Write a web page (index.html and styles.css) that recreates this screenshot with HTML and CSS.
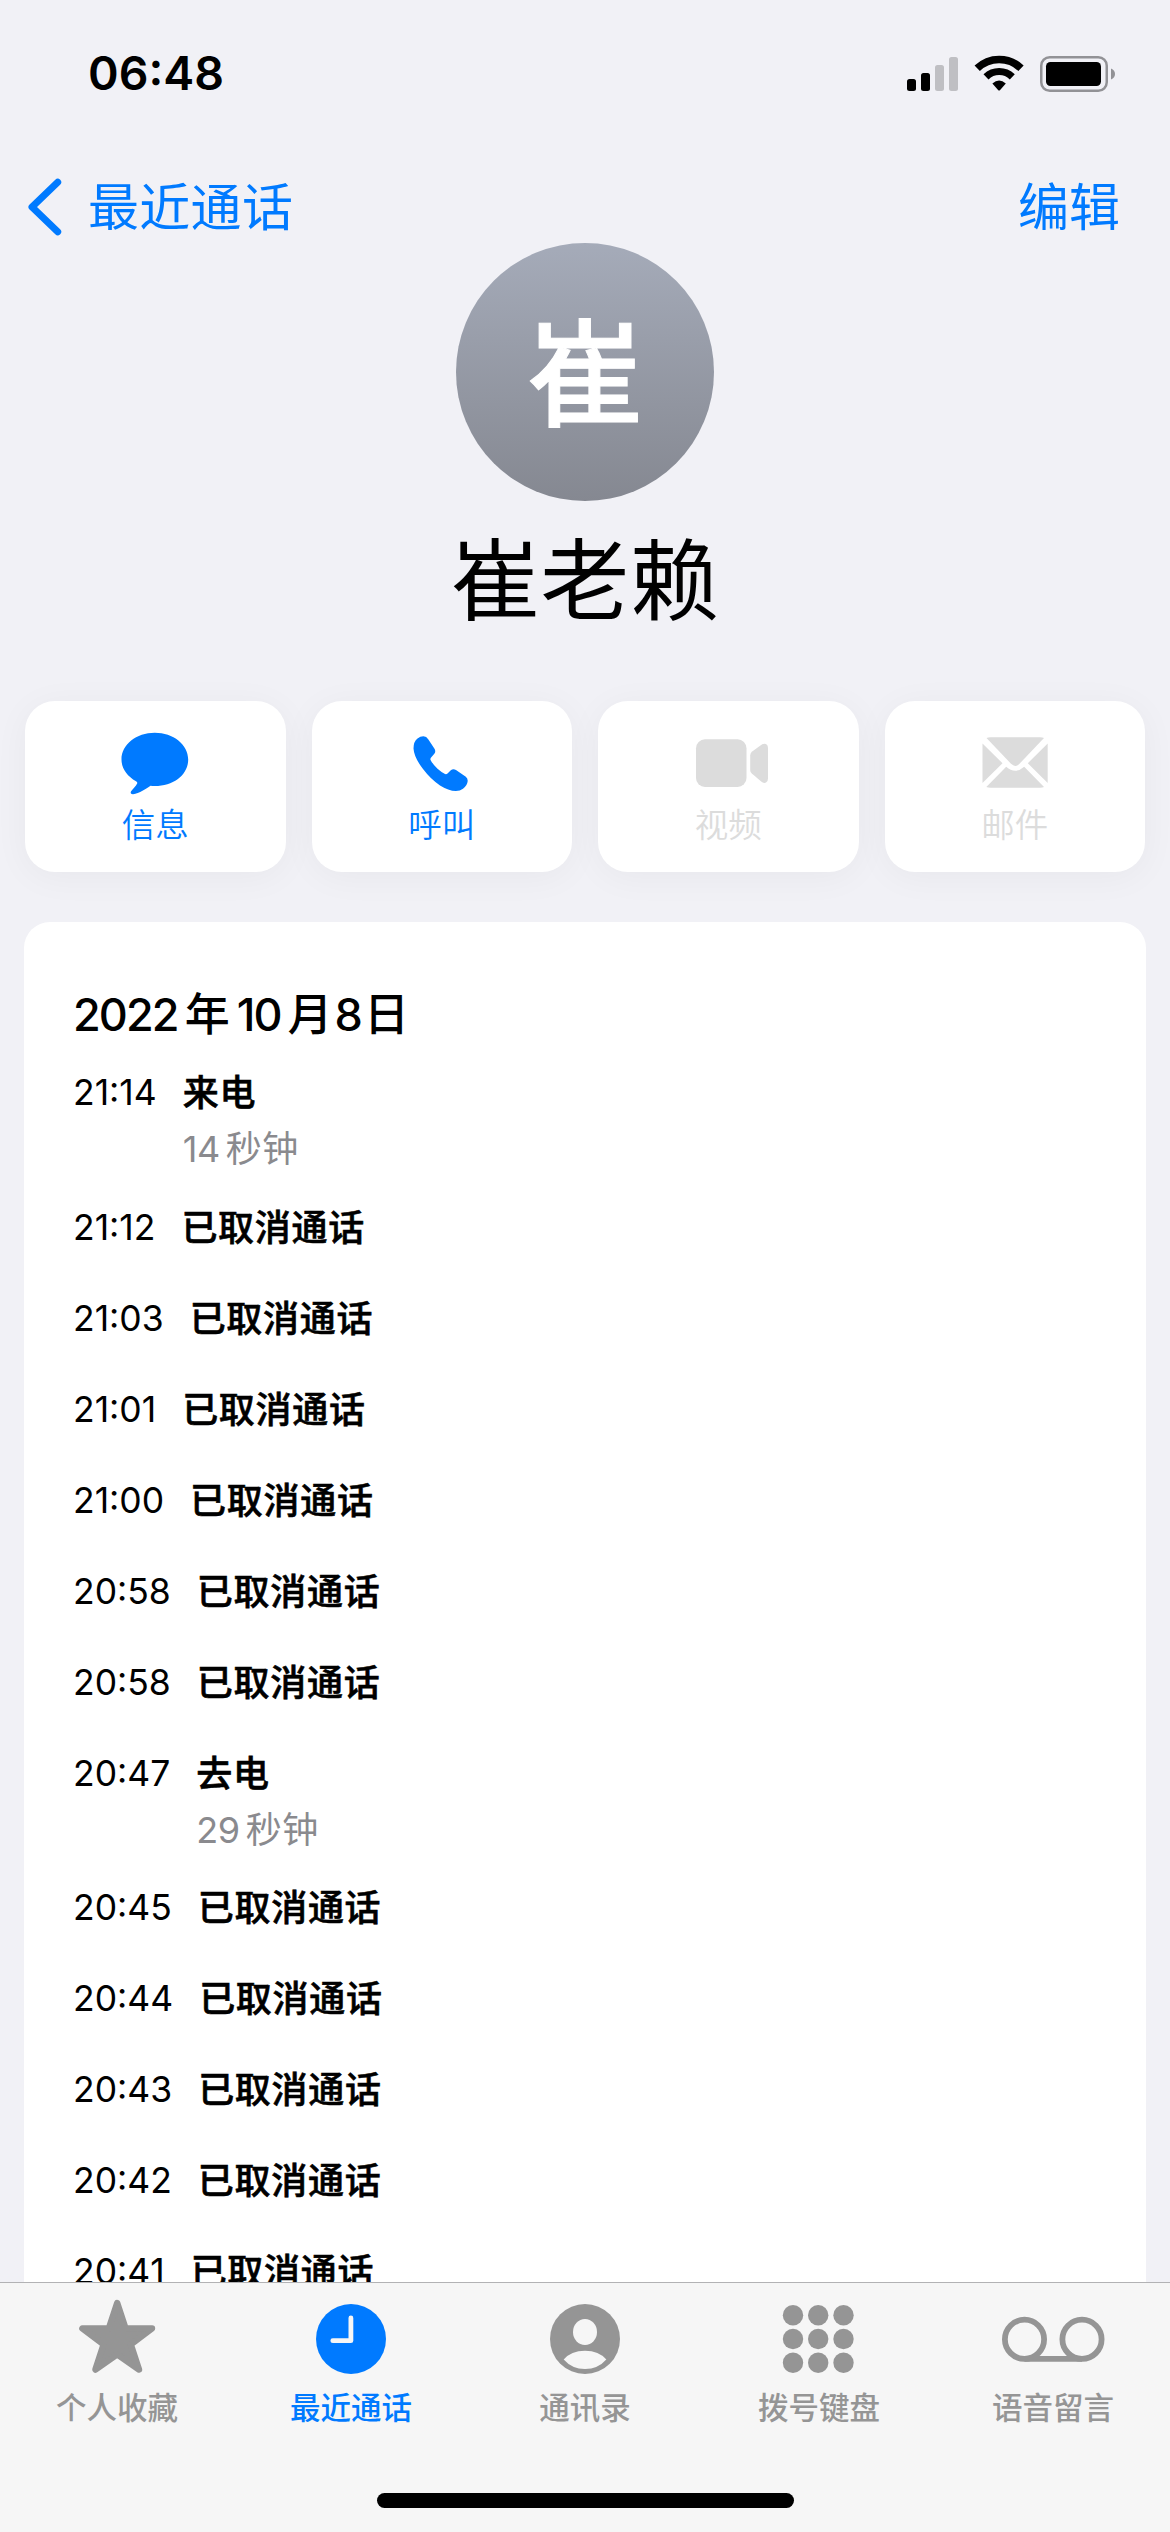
FILE: index.html
```html
<!DOCTYPE html>
<html lang="zh-CN">
<head>
<meta charset="utf-8">
<title>最近通话</title>
<link rel="stylesheet" href="styles.css">
</head>
<body>
<div class="screen">
  <header class="status">
    <span class="clock">06:48</span>
    <svg class="status-icons" width="209" height="37" viewBox="907 55 209 37">
      <rect x="907" y="79" width="9" height="12" rx="2.5"/>
      <rect x="921" y="73" width="9" height="18" rx="2.5"/>
      <rect x="935" y="65" width="9" height="26" rx="2.5" fill="#bfbfc3"/>
      <rect x="949" y="57" width="9" height="34" rx="2.5" fill="#bfbfc3"/>
      <path d="M977.2 68.3A31.500 31.500 0 0 1 1021 68.3" fill="none" stroke="#000" stroke-width="7.600"/>
      <path d="M986 76.800A19 19 0 0 1 1012.300 76.800" fill="none" stroke="#000" stroke-width="7.200"/>
      <path d="M992.400 83.500Q999.100 77.400 1005.800 83.500L999.900 90.200Q999.100 91 998.300 90.200Z"/>
      <rect x="1041.250" y="57.250" width="65.500" height="33.500" rx="8.500" fill="none" stroke="#929296" stroke-width="2.500"/>
      <rect x="1046" y="62" width="55" height="24" rx="4.500"/>
      <path d="M1111 68.500Q1115 70.200 1115 74Q1115 77.800 1111 79.500Z" fill="#929296"/>
    </svg>
  </header>

  <nav class="nav">
    <a class="back">
      <svg width="34" height="58" viewBox="28 178 34 58"><path d="M57.700 182.300L32 207L57.700 231.700" fill="none" stroke="#007aff" stroke-width="7" stroke-linecap="round" stroke-linejoin="round"/></svg>
      <span>最近通话</span>
    </a>
    <a class="edit">编辑</a>
  </nav>

  <main class="content">
    <div class="avatar">崔</div>
    <h1 class="name">崔老赖</h1>

    <div class="actions">
      <div class="action">
        <svg width="100" height="70" viewBox="105.500 729 100 70"><path d="M155.300 732.700C173.800 732.700 188.700 744.500 188.700 759.500C188.700 774.500 174.500 786 155.300 786Q153 786 151 785.700C146.500 788.700 140 793.300 133.500 794.200C131.500 794.300 130.600 792.800 131.600 791.300C133.300 789 136.300 786.300 137.900 782.900Q137.700 782 136.500 781.300C127.500 776 122 768.500 122 759.500C122 744.500 136.800 732.700 155.300 732.700Z"/></svg>
        <span>信息</span>
      </div>
      <div class="action">
        <svg width="100" height="70" viewBox="391.500 729 100 70"><path d="M422.900 736.300Q426 736.300 427.700 739.200L434 748.700Q435.500 751.200 434 753.500L430.400 757.700Q429.500 759 430.200 760.200Q432.500 764.500 437 768.800Q441 772.400 444.500 774Q446 774.500 447 773.500L450.300 770.200Q452.700 768.300 455.500 770L465.300 776.700Q467.300 778.300 467.200 781Q466.800 785.500 462.500 788.800Q459.500 791 455.400 791Q448 790.700 439.500 785.400Q430 779 422.500 769Q413.600 757.500 413 748.500Q413 741.500 417 738.500Q419.800 736.300 422.900 736.300Z"/></svg>
        <span>呼叫</span>
      </div>
      <div class="action disabled">
        <svg width="100" height="70" viewBox="678 729 100 70"><rect x="696" y="739.300" width="50.500" height="47.700" rx="9"/><path d="M750.200 755.500Q750.200 753.300 751.800 751.800L761.500 744.800Q764 743 766 744Q768 745 768 748V778.500Q768 781.500 766 782.600Q764 783.500 761.500 781.700L751.800 773.500Q750.200 772 750.200 770Z"/></svg>
        <span>视频</span>
      </div>
      <div class="action disabled">
        <svg width="100" height="70" viewBox="964.500 729 100 70"><path d="M986 738Q987.500 737.200 990 737.200H1039.500Q1042 737.200 1043.500 738L1019 763.800Q1014.800 768 1010.500 763.800Z"/><path d="M982 743.500L1002 763.300L982 783Z"/><path d="M1047.200 743.500L1027.300 763.300L1047.200 783Z"/><path d="M985.800 787L1005.700 766.800Q1014.800 774.700 1023.700 766.800L1043.500 787Q1042 787.800 1039.500 787.800H990Q987.500 787.800 985.800 787Z"/></svg>
        <span>邮件</span>
      </div>
    </div>

    <section class="log">
      <h2 class="date"><span>2022</span>年<span>10</span>月<span>8</span>日</h2>
      <div class="call long"><time>21:14</time><div><b>来电</b><p><span>14</span>秒钟</p></div></div>
      <div class="call"><time>21:12</time><b>已取消通话</b></div>
      <div class="call"><time>21:03</time><b>已取消通话</b></div>
      <div class="call"><time>21:01</time><b>已取消通话</b></div>
      <div class="call"><time>21:00</time><b>已取消通话</b></div>
      <div class="call"><time>20:58</time><b>已取消通话</b></div>
      <div class="call"><time>20:58</time><b>已取消通话</b></div>
      <div class="call long"><time>20:47</time><div><b>去电</b><p><span>29</span>秒钟</p></div></div>
      <div class="call"><time>20:45</time><b>已取消通话</b></div>
      <div class="call"><time>20:44</time><b>已取消通话</b></div>
      <div class="call"><time>20:43</time><b>已取消通话</b></div>
      <div class="call"><time>20:42</time><b>已取消通话</b></div>
      <div class="call"><time>20:41</time><b>已取消通话</b></div>
    </section>
  </main>

  <footer class="tabbar">
    <div class="tabs">
      <div class="tab">
        <svg width="110" height="78" viewBox="61 2298 110 78"><path d="M116.200 2303L124.500 2328.300L151 2328.500L129.800 2344.500L138 2369.500L116.200 2354.300L94.400 2369.500L102.600 2344.500L81.400 2328.500L107.900 2328.300Z" stroke="#959595" stroke-width="6.400" stroke-linejoin="round"/></svg>
        <span>个人收藏</span>
      </div>
      <div class="tab active">
        <svg width="110" height="78" viewBox="295 2298 110 78"><circle cx="350" cy="2339" r="35"/><path d="M349.900 2318V2340.700H331.800" fill="none" stroke="#f6f6f6" stroke-width="4.800" stroke-linecap="round" stroke-linejoin="round"/></svg>
        <span>最近通话</span>
      </div>
      <div class="tab">
        <svg width="110" height="78" viewBox="530 2298 110 78"><circle cx="585" cy="2339" r="35"/><ellipse cx="585" cy="2332" rx="12" ry="13" fill="#f6f6f6"/><path d="M563.700 2359.500Q571 2350.700 585 2350.700Q599 2350.700 606.300 2359.500Q598 2369 585 2369Q572 2369 563.700 2359.500Z" fill="#f6f6f6"/></svg>
        <span>通讯录</span>
      </div>
      <div class="tab">
        <svg width="110" height="78" viewBox="763 2298 110 78"><circle cx="792" cy="2315.300" r="10.200"/><circle cx="817.200" cy="2315.300" r="10.200"/><circle cx="842.500" cy="2315.300" r="10.200"/><circle cx="792" cy="2339" r="10.200"/><circle cx="817.200" cy="2339" r="10.200"/><circle cx="842.500" cy="2339" r="10.200"/><circle cx="792" cy="2362.800" r="10.200"/><circle cx="817.200" cy="2362.800" r="10.200"/><circle cx="842.500" cy="2362.800" r="10.200"/></svg>
        <span>拨号键盘</span>
      </div>
      <div class="tab">
        <svg width="110" height="78" viewBox="996 2298 110 78"><g fill="none" stroke="#959595" stroke-width="5.800"><circle cx="1022.500" cy="2339.300" r="19.600"/><circle cx="1080" cy="2339.300" r="19.600"/><path d="M1022.500 2358.900H1080"/></g></svg>
        <span>语音留言</span>
      </div>
    </div>
    <div class="home"></div>
  </footer>
</div>
</body>
</html>
```
FILE: styles.css
```css
* { box-sizing: border-box; margin: 0; padding: 0; }
body { font-family: Inter, "Noto Sans CJK SC", sans-serif; background: #f1f1f6; color: #000; }
svg { display: block; flex: none; }
.screen { width: 1170px; height: 2532px; display: flex; flex-direction: column; overflow: hidden; }

.status { height: 147px; flex: none; display: flex; align-items: center; justify-content: space-between; padding: 0 54px 0 88px; }
.clock { font-size: 46.500px; font-weight: 600; line-height: 149px; }

.nav { height: 96px; flex: none; display: flex; justify-content: space-between; padding: 31px 50px 0 28px; font-size: 51px; line-height: 60px; color: #007aff; }
.back { display: flex; align-items: center; gap: 26px; height: 60px; letter-spacing: .3px; }
.back svg { margin-top: -2px; }

.content { flex: 1; min-height: 0; overflow: hidden; }
.avatar { width: 258px; height: 258px; margin: 0 auto; border-radius: 50%; background: linear-gradient(#a5abb9, #858891); color: #fff; font-size: 116px; font-weight: 500; line-height: 264px; text-align: center; -webkit-text-stroke: 1px #fff; }
.name { font-size: 89px; font-weight: 400; line-height: 159px; text-align: center; letter-spacing: .5px; }

.actions { display: grid; grid-template-columns: repeat(4, 1fr); gap: 26px; margin-top: 41px; padding: 0 25px; }
.action { height: 171px; padding-top: 28px; display: flex; flex-direction: column; align-items: center; gap: 6px; border-radius: 30px; background: #fff; box-shadow: 0 5px 36px rgba(0, 0, 0, .045); color: #007aff; fill: #007aff; font-size: 33.500px; font-weight: 350; line-height: 40px; }
.action.disabled { color: #dcdcdc; fill: #dcdcdc; }

.log { position: relative; margin: 50px 24px 0; padding: 63px 49px 0; border-radius: 26px 26px 0 0; background: #fff; }
.date { margin-bottom: 20px; font-size: 45px; font-weight: 500; line-height: 60px; }
.date span { margin: 0 7px; letter-spacing: -1.900px; }
.date span:first-child { margin-left: 0; }
.date span:last-child { margin: 0 3px 0 2px; }
.call { display: flex; gap: 26px; padding-bottom: 35px; font-size: 36px; line-height: 56px; }
.call.long { padding-bottom: 22.500px; }
.call time { font-size: 35.500px; font-kerning: none; }
.call b { font-weight: 500; letter-spacing: .7px; -webkit-text-stroke: .6px #000; }
.call p { color: #8a8a8e; letter-spacing: .5px; }
.call p span { margin-right: 6px; letter-spacing: -.4px; }

.tabbar { height: 250px; flex: none; border-top: 1px solid #b2b2b4; background: #f6f6f6; padding-top: 15px; }
.tabs { display: grid; grid-template-columns: repeat(5, 1fr); height: 195px; }
.tab { display: flex; flex-direction: column; align-items: center; gap: 12px; color: #959595; fill: #959595; font-size: 30.500px; font-weight: 500; line-height: 40px; }
.tab.active { color: #007aff; fill: #007aff; }
.home { width: 417px; height: 15px; margin: 0 auto; border-radius: 8px; background: #000; }
```
